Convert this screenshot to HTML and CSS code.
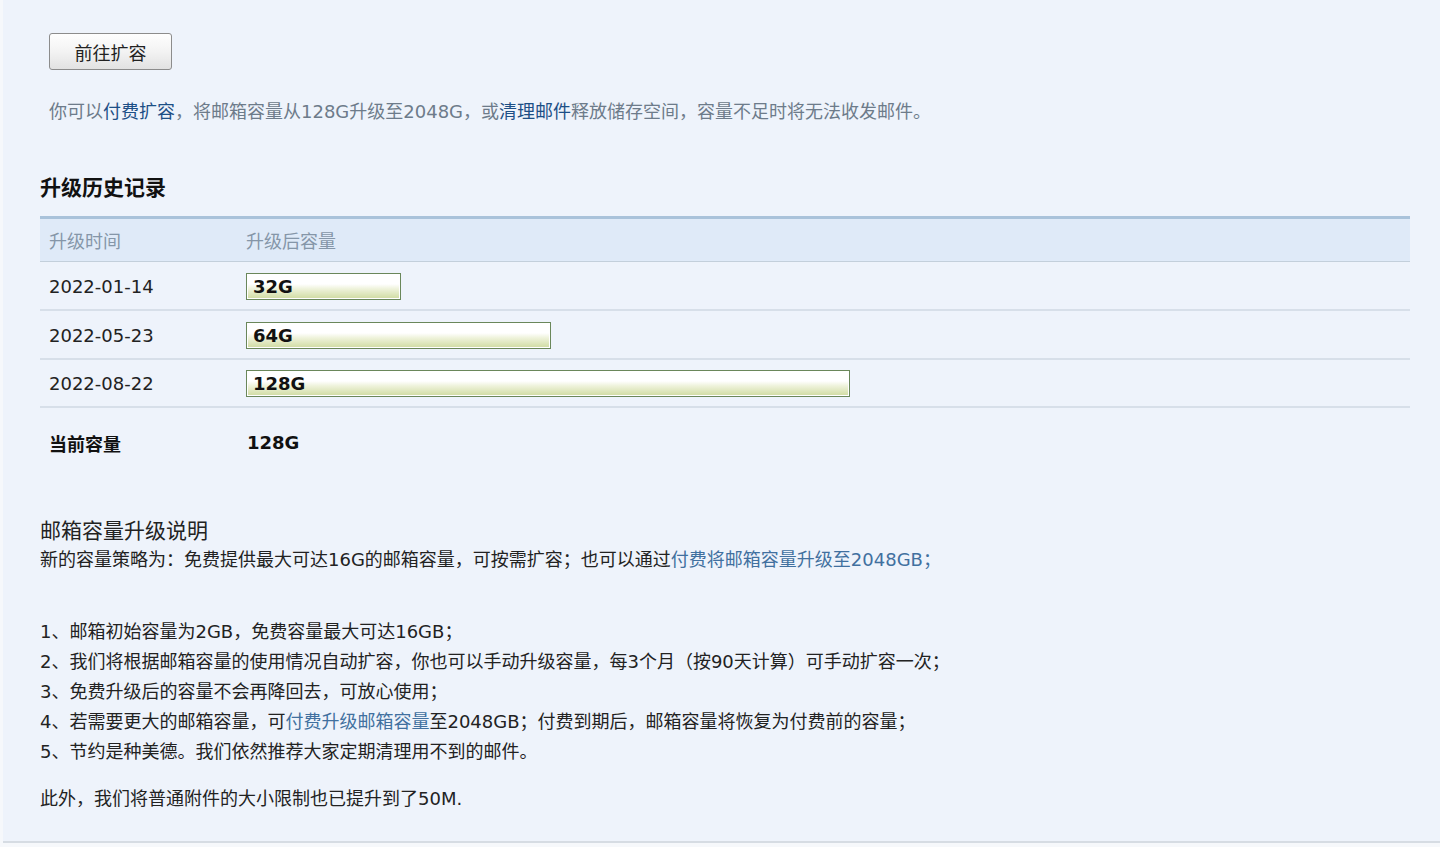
FILE: index.html
```html
<!DOCTYPE html>
<html lang="zh-CN">
<head>
<meta charset="utf-8">
<title>邮箱容量</title>
<link rel="stylesheet" href="styles.css">
</head>
<body>
<div class="panel">
  <div class="top">
    <button class="btn" type="button">前往扩容</button>
    <p class="intro">你可以<a class="link-dark" href="#">付费扩容</a>，将邮箱容量从128G升级至2048G，或<a class="link-dark" href="#">清理邮件</a>释放储存空间，容量不足时将无法收发邮件。</p>
  </div>

  <h2 class="section-title">升级历史记录</h2>
  <table class="history">
    <thead>
      <tr><th class="col-date">升级时间</th><th>升级后容量</th></tr>
    </thead>
    <tbody>
      <tr><td class="col-date">2022-01-14</td><td><span class="bar" style="width:155px">32G</span></td></tr>
      <tr><td class="col-date">2022-05-23</td><td><span class="bar" style="width:305px">64G</span></td></tr>
      <tr><td class="col-date">2022-08-22</td><td><span class="bar" style="width:604px">128G</span></td></tr>
      <tr class="current"><td class="col-date">当前容量</td><td>128G</td></tr>
    </tbody>
  </table>

  <div class="explain">
    <h3 class="explain-title">邮箱容量升级说明</h3>
    <p class="policy">新的容量策略为：免费提供最大可达16G的邮箱容量，可按需扩容；也可以通过<a class="link" href="#">付费将邮箱容量升级至2048GB；</a></p>
    <ul class="rules">
      <li>1、邮箱初始容量为2GB，免费容量最大可达16GB；</li>
      <li>2、我们将根据邮箱容量的使用情况自动扩容，你也可以手动升级容量，每3个月（按90天计算）可手动扩容一次；</li>
      <li>3、免费升级后的容量不会再降回去，可放心使用；</li>
      <li>4、若需要更大的邮箱容量，可<a class="link" href="#">付费升级邮箱容量</a>至2048GB；付费到期后，邮箱容量将恢复为付费前的容量；</li>
      <li>5、节约是种美德。我们依然推荐大家定期清理用不到的邮件。</li>
    </ul>
    <p class="extra">此外，我们将普通附件的大小限制也已提升到了50M.</p>
  </div>
</div>
</body>
</html>
```

FILE: styles.css
```css
* { box-sizing: border-box; }

html, body {
  margin: 0;
  padding: 0;
}

body {
  background: #f6f8fb;
  font-family: "DejaVu Sans", "Noto Sans CJK SC", sans-serif;
  font-size: 18px;
  color: #222;
  overflow: hidden;
}

.panel {
  margin-left: 3px;
  height: 843px;
  background: #eef3fb;
  border-bottom: 2px solid #d6dce3;
  padding: 33px 30px 0 37px;
}

.top {
  padding-left: 9px;
}

.btn {
  display: block;
  width: 123px;
  height: 37px;
  padding: 0;
  font-family: "DejaVu Sans", "Noto Sans CJK SC", sans-serif;
  font-size: 18px;
  color: #222;
  background: linear-gradient(to bottom, #fefefe 0%, #f3f3f3 50%, #e2e2e2 100%);
  border: 1px solid #8c8c8c;
  border-radius: 3px;
}

.intro {
  margin: 27px 0 0;
  line-height: 30px;
  color: #6d7b8a;
}

a {
  text-decoration: none;
}

.link-dark {
  color: #1d4f86;
}

.link {
  color: #41709f;
}

.section-title {
  margin: 46px 0 13px;
  font-size: 21px;
  line-height: 30px;
  font-weight: bold;
  color: #111;
}

.history {
  width: 100%;
  border-collapse: collapse;
}

.history thead tr {
  background: #dfeaf8;
  border-top: 3px solid #a9c2da;
  border-bottom: 1px solid #c3cfdb;
}

.history th {
  height: 44px;
  padding: 0;
  text-align: left;
  font-weight: normal;
  color: #8596a8;
}

.history .col-date {
  width: 206px;
  padding-left: 9px;
}

.history td {
  height: 48.5px;
  padding: 2px 0 0;
  border-bottom: 2px solid #d7dfe9;
  vertical-align: middle;
}

.bar {
  display: block;
  height: 27px;
  line-height: 25px;
  padding-left: 6px;
  font-weight: bold;
  color: #111;
  border: 1px solid #6a875a;
  background: linear-gradient(to bottom, #ffffff 0%, #ffffff 40%, #eef2da 60%, #cfdba0 100%);
  box-shadow: inset 0 0 0 1px #ffffff;
}

.history tr.current td {
  height: 70px;
  padding-top: 0;
  border-bottom: none;
  font-weight: bold;
  color: #111;
}

.history tr.current td:last-child {
  padding-left: 1px;
}

.explain-title {
  margin: 39px 0 0;
  font-size: 21px;
  line-height: 30px;
  font-weight: normal;
  color: #222;
}

.policy {
  margin: 0;
  line-height: 28px;
}

.rules {
  list-style: none;
  margin: 43px 0 0;
  padding: 0;
}

.rules li {
  line-height: 30px;
}

.extra {
  margin: 17px 0 0;
  line-height: 30px;
}
```
